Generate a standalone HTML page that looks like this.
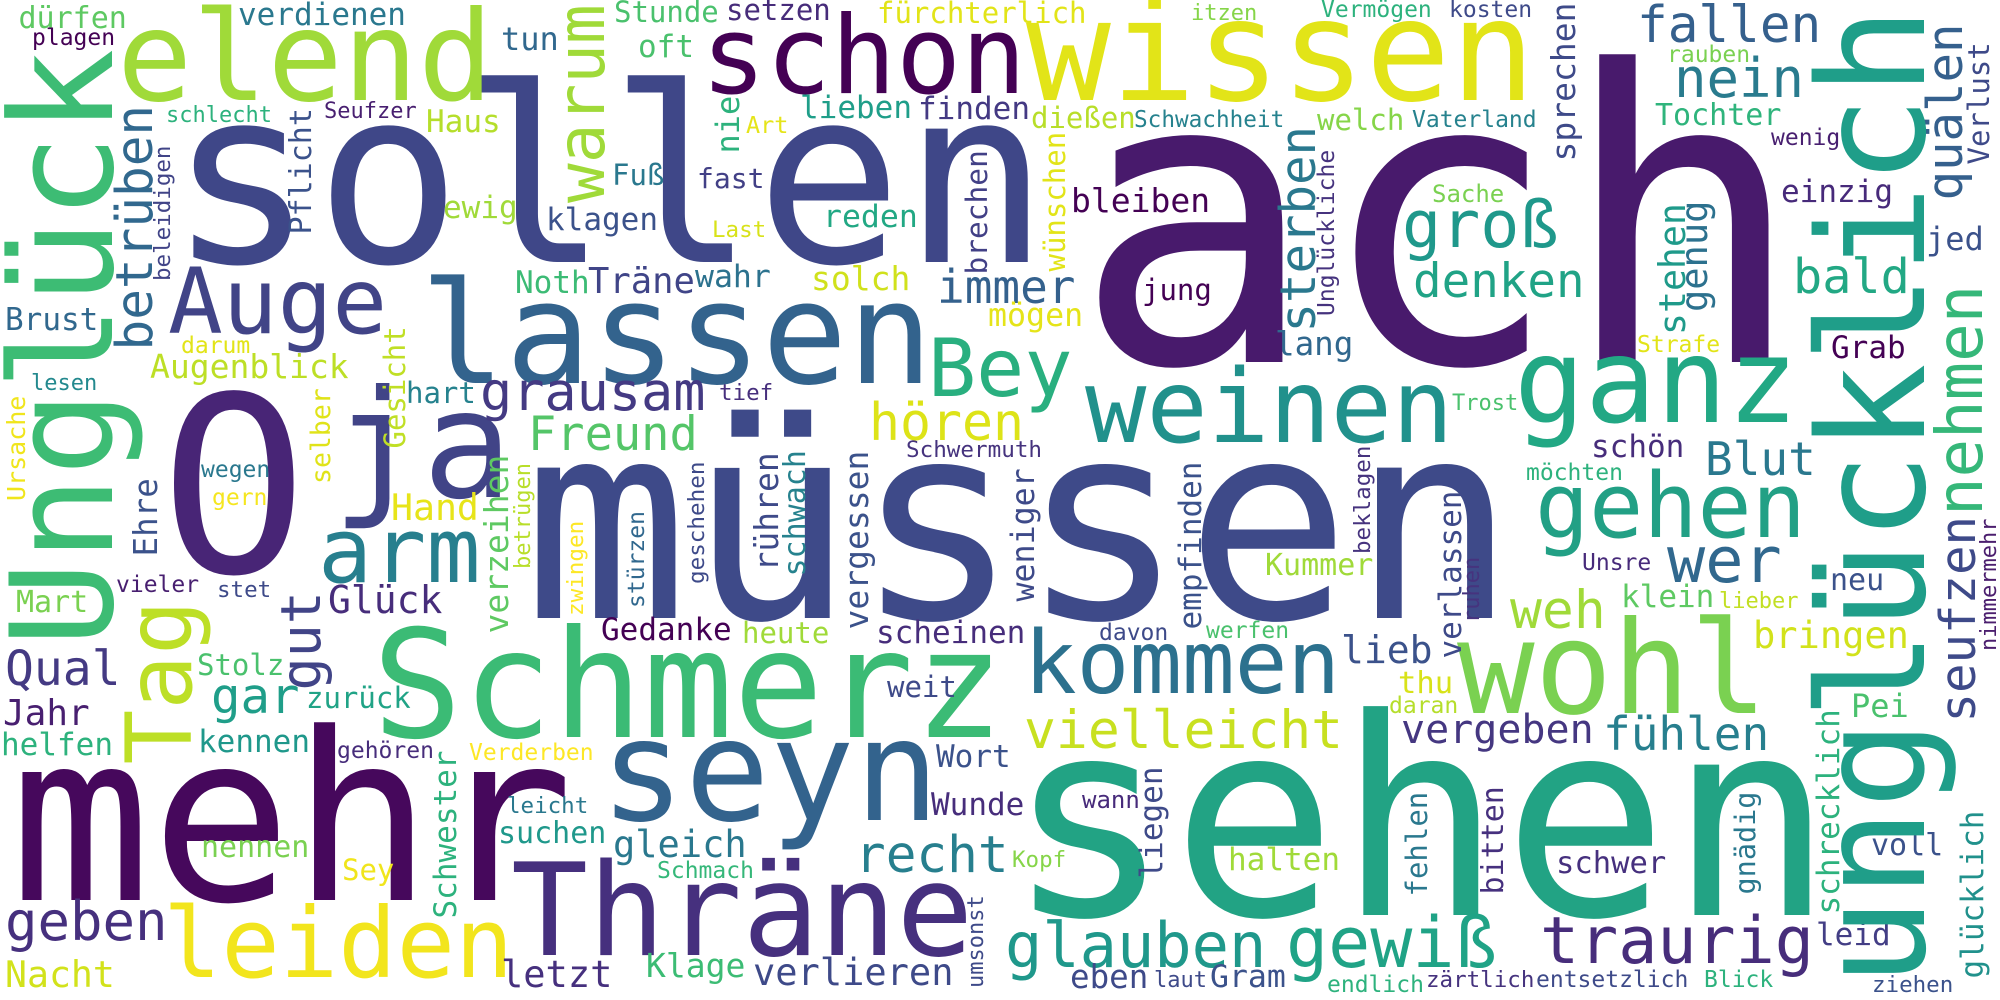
<!DOCTYPE html>
<html><head><meta charset="utf-8"><style>
html,body{margin:0;padding:0;background:#fff;width:2000px;height:1000px;overflow:hidden}
svg{display:block}
text{font-family:"DejaVu Sans Mono","Liberation Mono",monospace;white-space:pre}
</style></head><body>
<svg width="2000" height="1000" viewBox="0 0 2000 1000" xmlns="http://www.w3.org/2000/svg">
<rect width="2000" height="1000" fill="#fff"/>
<text x="1073" y="362" font-size="405" fill="#481a6c">ach</text>
<text x="523" y="618" font-size="275" fill="#3e4a89">müssen</text>
<text x="168" y="262" font-size="244" fill="#3f4788">sollen</text>
<text x="1006" y="915" font-size="275" fill="#22a384">sehen</text>
<text x="10" y="900" font-size="234" fill="#46085c">mehr</text>
<text x="160" y="572" font-size="245" fill="#482576">O</text>
<text x="372" y="737" font-size="150" fill="#3bbb75">Schmerz</text>
<text x="511" y="955" font-size="128" fill="#46307e">Thräne</text>
<text x="600" y="820" font-size="141" fill="#33638d">seyn</text>
<text x="420" y="383" font-size="142" fill="#33638d">lassen</text>
<text x="1026" y="100" font-size="141" fill="#e2e418">wissen</text>
<text x="701" y="93" font-size="108" fill="#440154">schon</text>
<text x="117" y="100" font-size="125" fill="#a0da39">elend</text>
<text x="1085" y="442" font-size="102" fill="#21918c">weinen</text>
<text x="1514" y="422" font-size="118" fill="#22a884">ganz</text>
<text x="1457" y="713" font-size="129" fill="#7ad151">wohl</text>
<text x="1024" y="693" font-size="87.5" fill="#2c718e">kommen</text>
<text x="163" y="977" font-size="97" fill="#f2e51d">leiden</text>
<text x="1535" y="537" font-size="90" fill="#22a085">gehen</text>
<text x="332" y="497" font-size="150" fill="#414487">ja</text>
<text x="168" y="333" font-size="91" fill="#414487">Auge</text>
<text x="318" y="582" font-size="90" fill="#277f8e">arm</text>
<text x="928" y="396" font-size="80" fill="#29af7f">Bey</text>

<text x="18.5" y="28" font-size="30" fill="#5ec962">dürfen</text>
<text x="238" y="25" font-size="31" fill="#2a788e">verdienen</text>
<text x="32" y="45" font-size="23" fill="#440154">plagen</text>
<text x="166" y="122" font-size="22" fill="#2db27d">schlecht</text>
<text x="324" y="118" font-size="22" fill="#481f70">Seufzer</text>
<text x="426" y="132" font-size="31" fill="#b5de2b">Haus</text>
<text x="5" y="330" font-size="31" fill="#31688e">Brust</text>
<text x="181" y="353" font-size="23" fill="#e2e418">darum</text>
<text x="150" y="378" font-size="33" fill="#bddf26">Augenblick</text>
<text x="31" y="390" font-size="22" fill="#23898e">lesen</text>
<text x="406" y="403" font-size="29" fill="#26828e">hart</text>
<text x="201" y="477" font-size="23" fill="#2a788e">wegen</text>
<text x="212" y="505" font-size="23" fill="#f5e61f">gern</text>
<text x="443" y="218" font-size="31" fill="#a0da39">ewig</text>
<text x="614" y="22" font-size="29" fill="#4ac16d">Stunde</text>
<text x="726" y="20" font-size="29" fill="#472c7a">setzen</text>
<text x="501" y="50" font-size="32" fill="#31688e">tun</text>
<text x="638" y="57" font-size="31" fill="#4ac16d">oft</text>
<text x="800" y="118" font-size="31" fill="#1f9e89">lieben</text>
<text x="918" y="119" font-size="31" fill="#443983">finden</text>
<text x="746" y="133" font-size="23.5" fill="#e5e419">Art</text>
<text x="612" y="185" font-size="29" fill="#2a788e">Fuß</text>
<text x="697" y="188" font-size="28" fill="#424086">fast</text>
<text x="546" y="230" font-size="31" fill="#3b528b">klagen</text>
<text x="712" y="237" font-size="22.5" fill="#d8e219">Last</text>
<text x="823" y="227" font-size="31.5" fill="#22a884">reden</text>
<text x="515" y="293" font-size="31" fill="#3cbb75">Noth</text>
<text x="588" y="293" font-size="35.5" fill="#404588">Träne</text>
<text x="695" y="287" font-size="31.5" fill="#2c728e">wahr</text>
<text x="811" y="290" font-size="33" fill="#d0e11c">solch</text>
<text x="937" y="303" font-size="46" fill="#34618d">immer</text>
<text x="480" y="410" font-size="53.5" fill="#443a83">grausam</text>
<text x="719" y="400" font-size="22.5" fill="#472f7d">tief</text>
<text x="528" y="450" font-size="47" fill="#54c568">Freund</text>
<text x="869" y="440" font-size="51.5" fill="#dde318">hören</text>
<text x="906" y="457" font-size="22.6" fill="#46337e">Schwermuth</text>
<text x="877" y="23" font-size="29" fill="#e2e418">fürchterlich</text>
<text x="1191" y="20" font-size="22" fill="#86d549">itzen</text>
<text x="1321" y="17" font-size="23" fill="#2db27d">Vermögen</text>
<text x="1449" y="17" font-size="23" fill="#3e4a89">kosten</text>
<text x="1031" y="128" font-size="29" fill="#b8de29">dießen</text>
<text x="1134" y="127" font-size="22.7" fill="#26828e">Schwachheit</text>
<text x="1317" y="130" font-size="29" fill="#86d549">welch</text>
<text x="1412" y="127" font-size="23" fill="#26828e">Vaterland</text>
<text x="1071" y="212" font-size="33" fill="#440154">bleiben</text>
<text x="1432" y="202" font-size="24" fill="#7ad151">Sache</text>
<text x="1402" y="247" font-size="65" fill="#1f988b">groß</text>
<text x="1413" y="297" font-size="47.5" fill="#20a386">denken</text>
<text x="1142" y="300" font-size="29" fill="#440154">jung</text>
<text x="988" y="326" font-size="31.6" fill="#e5e419">mögen</text>
<text x="1275" y="355" font-size="32.5" fill="#31688e">lang</text>
<text x="1452" y="410" font-size="22" fill="#4ac16d">Trost</text>
<text x="1637" y="42" font-size="51" fill="#35608d">fallen</text>
<text x="1667" y="62" font-size="23" fill="#7ad151">rauben</text>
<text x="1674" y="97" font-size="54" fill="#297b8e">nein</text>
<text x="1655" y="125" font-size="30" fill="#2fb47c">Tochter</text>
<text x="1771" y="145" font-size="23" fill="#481f70">wenig</text>
<text x="1781" y="202" font-size="31" fill="#472a7a">einzig</text>
<text x="1637" y="352" font-size="23" fill="#e2e418">Strafe</text>
<text x="1793" y="293" font-size="48.5" fill="#22a884">bald</text>
<text x="1831" y="358" font-size="31" fill="#440154">Grab</text>
<text x="1926" y="250" font-size="32" fill="#3b528b">jed</text>
<text x="1591" y="457" font-size="31" fill="#472d7b">schön</text>
<text x="1705" y="475" font-size="46" fill="#2a788e">Blut</text>
<text x="1526" y="480" font-size="23" fill="#2db27d">möchten</text>
<text x="1582" y="570" font-size="23" fill="#472a7a">Unsre</text>
<text x="1667" y="582" font-size="63.5" fill="#31688e">wer</text>
<text x="1510" y="628" font-size="53" fill="#a0da39">weh</text>
<text x="1621" y="607" font-size="31" fill="#5ec962">klein</text>
<text x="1719" y="608" font-size="22" fill="#c2df23">lieber</text>
<text x="1830" y="590" font-size="30" fill="#3b528b">neu</text>
<text x="1753" y="648" font-size="37" fill="#d2e21b">bringen</text>
<text x="1603" y="750" font-size="46" fill="#277f8e">fühlen</text>
<text x="1401" y="743" font-size="40" fill="#453781">vergeben</text>
<text x="1851" y="717" font-size="32" fill="#4ac16d">Pei</text>
<text x="1556" y="873" font-size="30.5" fill="#46307e">schwer</text>
<text x="1871" y="855" font-size="30" fill="#3b528b">voll</text>
<text x="1540" y="963" font-size="65" fill="#472d7b">traurig</text>
<text x="1816" y="945" font-size="31" fill="#433e85">leid</text>
<text x="1872" y="992" font-size="22.5" fill="#3b528b">ziehen</text>
<text x="1704" y="987" font-size="23" fill="#2db27d">Blick</text>
<text x="1536" y="987" font-size="23" fill="#3e4a89">entsetzlich</text>
<text x="1426" y="987" font-size="22.5" fill="#46337e">zärtlich</text>
<text x="1265" y="575" font-size="30" fill="#a0da39">Kummer</text>
<text x="1099" y="640" font-size="23" fill="#3e4a89">davon</text>
<text x="1206" y="638" font-size="23" fill="#4ac16d">werfen</text>
<text x="1341" y="663" font-size="38" fill="#3b528b">lieb</text>
<text x="1398" y="693" font-size="30.5" fill="#d8e219">thu</text>
<text x="1389" y="713" font-size="23" fill="#b5de2b">daran</text>
<text x="1024" y="748" font-size="53" fill="#c8e020">vielleicht</text>
<text x="1082" y="808" font-size="24" fill="#472a7a">wann</text>
<text x="1012" y="867" font-size="22.5" fill="#86d549">Kopf</text>
<text x="1228" y="870" font-size="31" fill="#a0da39">halten</text>
<text x="1005" y="967" font-size="62" fill="#1f988b">glauben</text>
<text x="1286" y="967" font-size="70" fill="#20a386">gewiß</text>
<text x="1070" y="988" font-size="32.5" fill="#3e4a89">eben</text>
<text x="1154" y="987" font-size="22" fill="#3e4a89">laut</text>
<text x="1210" y="987" font-size="31.5" fill="#3b528b">Gram</text>
<text x="1327" y="992" font-size="23" fill="#2db27d">endlich</text>
<text x="601" y="640" font-size="31" fill="#440154">Gedanke</text>
<text x="742" y="643" font-size="29" fill="#a0da39">heute</text>
<text x="876" y="643" font-size="31" fill="#472d7b">scheinen</text>
<text x="887" y="697" font-size="29" fill="#3e4a89">weit</text>
<text x="469" y="760" font-size="23" fill="#fde725">Verderben</text>
<text x="936" y="767" font-size="31" fill="#3b528b">Wort</text>
<text x="931" y="815" font-size="31" fill="#472d7b">Wunde</text>
<text x="507" y="813" font-size="22.5" fill="#2a788e">leicht</text>
<text x="498" y="843" font-size="30" fill="#1f988b">suchen</text>
<text x="613" y="857" font-size="37" fill="#2a788e">gleich</text>
<text x="855" y="872" font-size="51" fill="#277f8e">recht</text>
<text x="657" y="878" font-size="23" fill="#35b779">Schmach</text>
<text x="501" y="987" font-size="37" fill="#46307e">letzt</text>
<text x="646" y="977" font-size="33" fill="#3cbc74">Klage</text>
<text x="753" y="985" font-size="37" fill="#3e4a89">verlieren</text>
<text x="391" y="520" font-size="36.5" fill="#e7e419">Hand</text>
<text x="116" y="592" font-size="23" fill="#481f70">vieler</text>
<text x="217" y="597" font-size="22.5" fill="#3e4a89">stet</text>
<text x="16" y="612" font-size="30" fill="#7ad151">Mart</text>
<text x="328" y="613" font-size="38" fill="#472d7b">Glück</text>
<text x="5" y="685" font-size="48" fill="#443a83">Qual</text>
<text x="197" y="675" font-size="29" fill="#4ac16d">Stolz</text>
<text x="211" y="713" font-size="49" fill="#1f9e89">gar</text>
<text x="306" y="708" font-size="29" fill="#20a386">zurück</text>
<text x="3" y="725" font-size="36" fill="#481f70">Jahr</text>
<text x="1" y="755" font-size="31" fill="#2db27d">helfen</text>
<text x="198" y="752" font-size="31" fill="#1f988b">kennen</text>
<text x="337" y="758" font-size="23" fill="#472d7b">gehören</text>
<text x="201" y="857" font-size="30" fill="#7ad151">nennen</text>
<text x="342" y="880" font-size="29" fill="#f0e51c">Sey</text>
<text x="5" y="940" font-size="54" fill="#46307e">geben</text>
<text x="5" y="987" font-size="36.5" fill="#d2e21b">Nacht</text>

<text transform="translate(112,647) rotate(-90)" font-size="142" fill="#3dbc74">Unglück</text>
<text transform="translate(152,350.5) rotate(-90)" font-size="51" fill="#31688e">betrüben</text>
<text transform="translate(170,281) rotate(-90)" font-size="22.5" fill="#414487">beleidigen</text>
<text transform="translate(311,234.5) rotate(-90)" font-size="30" fill="#3b528b">Pflicht</text>
<text transform="translate(405,448.5) rotate(-90)" font-size="29" fill="#c0df25">Gesicht</text>
<text transform="translate(330,484) rotate(-90)" font-size="26.5" fill="#e0e318">selber</text>
<text transform="translate(25,501) rotate(-90)" font-size="25" fill="#f0e51c">Ursache</text>
<text transform="translate(604,203) rotate(-90)" font-size="66" fill="#a0da39">warum</text>
<text transform="translate(739,153.5) rotate(-90)" font-size="32" fill="#2db27d">nie</text>
<text transform="translate(987,274.5) rotate(-90)" font-size="29.5" fill="#424086">brechen</text>
<text transform="translate(1065,271.5) rotate(-90)" font-size="29" fill="#e2e418">wünschen</text>
<text transform="translate(1315,332.5) rotate(-90)" font-size="49" fill="#2a788e">sterben</text>
<text transform="translate(1334,316) rotate(-90)" font-size="23" fill="#46337e">Unglückliche</text>
<text transform="translate(1575,161.5) rotate(-90)" font-size="33" fill="#3e4a89">sprechen</text>
<text transform="translate(1685,335) rotate(-90)" font-size="36.5" fill="#1f9a8a">stehen</text>
<text transform="translate(1707,312) rotate(-90)" font-size="37" fill="#2c718e">genug</text>
<text transform="translate(1962,200.5) rotate(-90)" font-size="49" fill="#35608d">quälen</text>
<text transform="translate(1989,164.5) rotate(-90)" font-size="29" fill="#3e4a89">Verlust</text>
<text transform="translate(1924,987) rotate(-90)" font-size="148" fill="#1f9e89">unglücklich</text>
<text transform="translate(1982,516) rotate(-90)" font-size="64" fill="#35b779">nehmen</text>
<text transform="translate(1975,722.5) rotate(-90)" font-size="49" fill="#3e4a89">seufzen</text>
<text transform="translate(1996,651) rotate(-90)" font-size="22" fill="#4b1e6e">nimmermehr</text>
<text transform="translate(1839,914.5) rotate(-90)" font-size="31" fill="#2db27d">schrecklich</text>
<text transform="translate(1755,894.5) rotate(-90)" font-size="28.5" fill="#2a788e">gnädig</text>
<text transform="translate(1983,978.5) rotate(-90)" font-size="31" fill="#21918c">glücklich</text>
<text transform="translate(1503,894.5) rotate(-90)" font-size="30" fill="#46307e">bitten</text>
<text transform="translate(1034,601.5) rotate(-90)" font-size="31.6" fill="#3e4a89">weniger</text>
<text transform="translate(1201,629.5) rotate(-90)" font-size="31" fill="#3b528b">empfinden</text>
<text transform="translate(1370,554) rotate(-90)" font-size="22.5" fill="#46337e">beklagen</text>
<text transform="translate(1461,658.5) rotate(-90)" font-size="31" fill="#3e4a89">verlassen</text>
<text transform="translate(1479,623) rotate(-90)" font-size="22" fill="#46337e">ruhen</text>
<text transform="translate(1162,878.5) rotate(-90)" font-size="31" fill="#3e4a89">liegen</text>
<text transform="translate(1427,896.5) rotate(-90)" font-size="29" fill="#2a788e">fehlen</text>
<text transform="translate(508,633.5) rotate(-90)" font-size="33" fill="#5ec962">verzeihen</text>
<text transform="translate(530,569) rotate(-90)" font-size="22" fill="#b8de29">betrügen</text>
<text transform="translate(583,616) rotate(-90)" font-size="22.6" fill="#fde725">zwingen</text>
<text transform="translate(644,608) rotate(-90)" font-size="23" fill="#31688e">stürzen</text>
<text transform="translate(704,584) rotate(-90)" font-size="22.6" fill="#3e4a89">geschehen</text>
<text transform="translate(778,571.5) rotate(-90)" font-size="33" fill="#3e4a89">rühren</text>
<text transform="translate(805,576.5) rotate(-90)" font-size="30" fill="#26828e">schwach</text>
<text transform="translate(868,629.5) rotate(-90)" font-size="33" fill="#3b528b">vergessen</text>
<text transform="translate(983,988) rotate(-90)" font-size="22" fill="#3e4a89">umsonst</text>
<text transform="translate(157,556.5) rotate(-90)" font-size="32.5" fill="#3b528b">Ehre</text>
<text transform="translate(191,764.5) rotate(-90)" font-size="91" fill="#bddf26">Tag</text>
<text transform="translate(320,690.5) rotate(-90)" font-size="55" fill="#414487">gut</text>
<text transform="translate(456,918.5) rotate(-90)" font-size="31" fill="#2db27d">Schwester</text>
</svg>
</body></html>
